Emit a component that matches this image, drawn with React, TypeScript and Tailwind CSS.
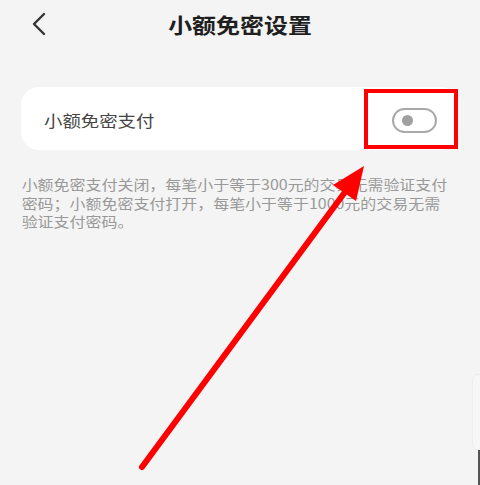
// 小额免密设置页面

export default function App() {
  return (
    <div
      className="relative w-[480px] h-[485px] overflow-hidden bg-[#f4f4f4]"
      style={{ fontFamily: '"Noto Sans CJK SC", "Noto Sans", sans-serif' }}
    >
      {/* 顶部导航 */}
      <header className="relative h-[48px] flex items-center justify-center">
        <button className="absolute left-[30px] top-[12px] w-[18px] h-[24px] flex items-center justify-center">
          <svg width="16" height="24" viewBox="0 0 16 24" fill="none">
            <path d="M13 2 L3 12 L13 22" stroke="#333" strokeWidth="2.4" strokeLinecap="round" strokeLinejoin="round" />
          </svg>
        </button>
        <h1 className="text-[21px] font-bold text-[#1f1f1f] leading-none scale-x-[1.14]">小额免密设置</h1>
      </header>

      {/* 设置卡片 */}
      <div className="ml-[21px] mt-[39px] w-[438px] h-[63px] bg-white rounded-[18px] flex items-center justify-between pl-[23px] pr-[22px]">
        <span className="text-[16px] text-[#444] leading-none mt-[2px] origin-left scale-x-[1.15]">小额免密支付</span>
        <div className="w-[45px] h-[25px] rounded-full border-2 border-[#a8a8a8] flex items-center pl-[8px] mt-[3px]">
          <div className="w-[11px] h-[11px] rounded-full bg-[#a0a0a0]" />
        </div>
      </div>

      {/* 说明文字 */}
      <p className="mt-[25px] pl-[19px] text-[14px] leading-[18.5px] text-[#999] whitespace-nowrap origin-left scale-x-[1.14]">
        小额免密支付关闭，每笔小于等于300元的交易无需验证支付
        <br />
        密码；小额免密支付打开，每笔小于等于1000元的交易无需
        <br />
        验证支付密码。
      </p>

      {/* 底部残影 */}
      <div className="absolute right-[-10px] top-[374px] w-[18px] h-[76px] rounded-l-[6px] border border-[#ececec] bg-[#f6f6f6]" />
      <div className="absolute right-0 top-[450px] w-[2px] h-[35px] bg-[#555]" />

      {/* 标注 */}
      <svg className="absolute inset-0 pointer-events-none" width="480" height="485" viewBox="0 0 480 485">
        <rect x="366" y="91" width="90" height="56" fill="none" stroke="#ff0000" strokeWidth="4" />
        <line x1="142" y1="467" x2="348" y2="188" stroke="#ff0000" strokeWidth="6" strokeLinecap="round" />
        <polygon points="364,166 333,185 356,201" fill="#ff0000" />
      </svg>
    </div>
  );
}
